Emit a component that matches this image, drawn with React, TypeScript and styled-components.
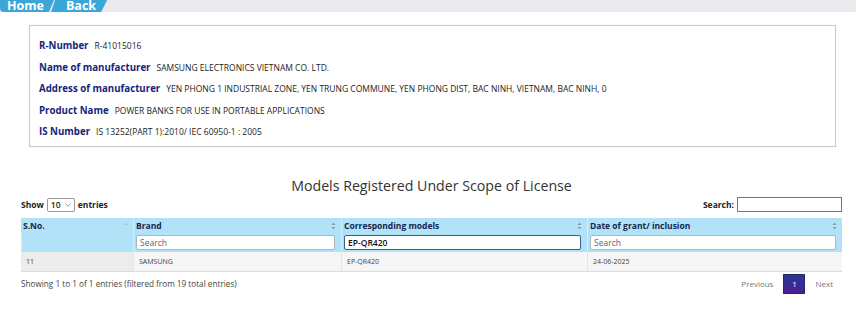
import styled, { createGlobalStyle } from "styled-components";

const Global = createGlobalStyle`
  body {
    margin: 0;
    background: #fff;
    font-family: "Open Sans", "DejaVu Sans", sans-serif;
  }
`;

const TopBar = styled.div`
  height: 12px;
  background: #e9e9ee;
  display: flex;
  align-items: flex-end;
  overflow: hidden;
`;

const Tab = styled.div<{ first?: boolean }>`
  height: 12px;
  display: flex;
  align-items: center;
  padding: 0 ${(p) => (p.first ? "10px" : "11px")} 0 ${(p) => (p.first ? "7px" : "16px")};
  margin-left: ${(p) => (p.first ? "0" : "-4px")};
  background: #3ba7d9;
  color: #fff;
  font-weight: 700;
  font-size: 12.5px;
  line-height: 12px;
  border-bottom-left-radius: ${(p) => (p.first ? "4px" : "0")};
  clip-path: ${(p) =>
    p.first
      ? "polygon(0 0, 100% 0, calc(100% - 5px) 100%, 0 100%)"
      : "polygon(5px 0, 100% 0, calc(100% - 6px) 100%, 1px 100%)"};
`;

const InfoBox = styled.div`
  margin: 13px 20px 0 29px;
  border: 1px solid #c9c9c9;
  box-shadow: 0 0 1px rgba(0, 0, 0, 0.08);
  padding: 9px 10px 3px 9px;
`;

const InfoRow = styled.div`
  height: 21.5px;
  display: flex;
  align-items: center;
  gap: 6px;
`;

const Label = styled.span`
  color: #16257a;
  font-weight: 700;
  font-size: 9.7px;
`;

const Value = styled.span`
  color: #222;
  font-size: 8.5px;
`;

const Section = styled.div`
  margin: 0 14px 0 21px;
`;

const Title = styled.h2`
  margin: 28px 0 0;
  text-align: center;
  font-weight: 400;
  font-size: 14.2px;
  line-height: 21px;
  color: #333;
`;

const Controls = styled.div`
  display: flex;
  justify-content: space-between;
  align-items: center;
  height: 18px;
  font-size: 8.5px;
  font-weight: 700;
  color: #222;
`;

const Inline = styled.label`
  display: flex;
  align-items: center;
  gap: 3px;
`;

const Select = styled.div`
  width: 28px;
  height: 14px;
  box-sizing: border-box;
  border: 1px solid #999;
  border-radius: 2px;
  display: flex;
  align-items: center;
  justify-content: space-between;
  padding: 0 3px;
  font-weight: 600;
  color: #222;
`;

const Caret = styled.svg`
  width: 6px;
  height: 4px;
`;

const SearchBox = styled.div`
  width: 105px;
  height: 15px;
  box-sizing: border-box;
  border: 1px solid #777;
`;

const Table = styled.div`
  display: grid;
  grid-template-columns: 112px 208px 246px 255px;
  border-bottom: 1px solid #ddd;
  margin-top: 4px;
`;

const HeadCell = styled.div`
  height: 16px;
  background: #b1e2f7;
  border-left: 1px solid #d4eefa;
  display: flex;
  align-items: center;
  justify-content: space-between;
  padding: 0 5px 0 2px;
  font-size: 8.5px;
  font-weight: 700;
  color: #15254d;
  &:first-child {
    border-left: 0;
  }
`;

const FilterCell = styled.div`
  height: 18px;
  background: #b1e2f7;
  border-left: 1px solid #d4eefa;
  display: flex;
  align-items: center;
  padding: 0 6px 0 2px;
`;

const FilterInput = styled.div<{ active?: boolean }>`
  flex: 1;
  height: 15px;
  box-sizing: border-box;
  background: #fff;
  border: 1px solid ${(p) => (p.active ? "#3a5f8f" : "#a9b8c2")};
  border-radius: 2px;
  display: flex;
  align-items: center;
  padding: 0 3px;
  font-size: 8.5px;
  color: ${(p) => (p.active ? "#111" : "#666")};
  font-weight: ${(p) => (p.active ? 600 : 400)};
`;

const Cell = styled.div<{ sorted?: boolean }>`
  height: 19px;
  background: ${(p) => (p.sorted ? "#ececec" : "#f6f6f6")};
  border-left: 1px solid #e4e4e4;
  display: flex;
  align-items: center;
  padding-left: 5px;
  font-size: 7px;
  color: #444;
`;

const Footer = styled.div`
  display: flex;
  justify-content: space-between;
  align-items: center;
  margin-top: 2px;
  font-size: 8.2px;
  color: #444;
`;

const Pager = styled.div`
  display: flex;
  align-items: center;
  gap: 10px;
  margin-right: 9px;
  color: #777;
  font-size: 8px;
`;

const PageBtn = styled.div`
  width: 22px;
  height: 20px;
  display: flex;
  align-items: center;
  justify-content: center;
  color: #fff;
  background: linear-gradient(#2b3797, #4a1f8e);
  border: 1px solid #222a6a;
  box-sizing: border-box;
`;

const SortIcon = ({ up }: { up?: boolean }) => (
  <svg width="5" height="8" viewBox="0 0 5 8">
    <path d="M2.5 0.5L4.5 3H0.5Z" fill={up ? "#a9c3d3" : "#8d9aa3"} />
    {!up && <path d="M2.5 7.5L4.5 5H0.5Z" fill="#8d9aa3" />}
  </svg>
);

const info = [
  ["R-Number", "R-41015016"],
  ["Name of manufacturer", "SAMSUNG ELECTRONICS VIETNAM CO. LTD."],
  [
    "Address of manufacturer",
    "YEN PHONG 1 INDUSTRIAL ZONE, YEN TRUNG COMMUNE, YEN PHONG DIST, BAC NINH, VIETNAM, BAC NINH, 0",
  ],
  ["Product Name", "POWER BANKS FOR USE IN PORTABLE APPLICATIONS"],
  ["IS Number", "IS 13252(PART 1):2010/ IEC 60950-1 : 2005"],
];

const App = () => {
  return (
    <>
      <Global />
      <TopBar>
        <Tab first>Home</Tab>
        <Tab>Back</Tab>
      </TopBar>
      <InfoBox>
        {info.map(([l, v]) => (
          <InfoRow key={l}>
            <Label>{l}</Label>
            <Value>{v}</Value>
          </InfoRow>
        ))}
      </InfoBox>
      <Section>
        <Title>Models Registered Under Scope of License</Title>
        <Controls>
          <Inline>
            Show
            <Select>
              10
              <Caret viewBox="0 0 6 4">
                <path d="M0.5 0.5L3 3.2L5.5 0.5" stroke="#888" strokeWidth="0.8" fill="none" />
              </Caret>
            </Select>
            entries
          </Inline>
          <Inline>
            Search:
            <SearchBox />
          </Inline>
        </Controls>
        <Table>
          <HeadCell>
            S.No. <SortIcon up />
          </HeadCell>
          <HeadCell>
            Brand <SortIcon />
          </HeadCell>
          <HeadCell>
            Corresponding models <SortIcon />
          </HeadCell>
          <HeadCell>
            Date of grant/ inclusion <SortIcon />
          </HeadCell>
          <FilterCell />
          <FilterCell>
            <FilterInput>Search</FilterInput>
          </FilterCell>
          <FilterCell>
            <FilterInput active>EP-QR420</FilterInput>
          </FilterCell>
          <FilterCell>
            <FilterInput>Search</FilterInput>
          </FilterCell>
          <Cell sorted style={{ borderLeft: 0 }}>11</Cell>
          <Cell>SAMSUNG</Cell>
          <Cell>EP-QR420</Cell>
          <Cell>24-06-2025</Cell>
        </Table>
        <Footer>
          <span>Showing 1 to 1 of 1 entries (filtered from 19 total entries)</span>
          <Pager>
            <span>Previous</span>
            <PageBtn>1</PageBtn>
            <span>Next</span>
          </Pager>
        </Footer>
      </Section>
    </>
  );
};

export default App;
